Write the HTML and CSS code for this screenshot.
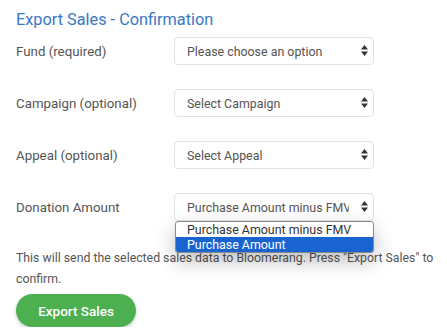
FILE: index.html
```html
<!DOCTYPE html>
<html lang="en">
<head>
    <meta charset="UTF-8">
    <title>Export Sales - Confirmation</title>
    <link rel="stylesheet" href="styles.css">
</head>
<body>
    <div class="page">
        <h2 class="title">Export Sales - Confirmation</h2>

        <form class="export-form">
            <div class="row">
                <label for="fund">Fund (required)</label>
                <div class="select-wrap">
                    <select id="fund"><option>Please choose an option</option></select>
                    <svg class="arrows" width="7" height="11" viewBox="0 0 7 11"><path d="M3.5 0L7 4.5H0Z M3.5 11L7 6.5H0Z" fill="#333"/></svg>
                </div>
            </div>
            <div class="row">
                <label for="campaign">Campaign (optional)</label>
                <div class="select-wrap">
                    <select id="campaign"><option>Select Campaign</option></select>
                    <svg class="arrows" width="7" height="11" viewBox="0 0 7 11"><path d="M3.5 0L7 4.5H0Z M3.5 11L7 6.5H0Z" fill="#333"/></svg>
                </div>
            </div>
            <div class="row">
                <label for="appeal">Appeal (optional)</label>
                <div class="select-wrap">
                    <select id="appeal"><option>Select Appeal</option></select>
                    <svg class="arrows" width="7" height="11" viewBox="0 0 7 11"><path d="M3.5 0L7 4.5H0Z M3.5 11L7 6.5H0Z" fill="#333"/></svg>
                </div>
            </div>
            <div class="row">
                <label for="amount">Donation Amount</label>
                <div class="select-wrap">
                    <select id="amount"><option>Purchase Amount minus FMV</option><option>Purchase Amount</option></select>
                    <svg class="arrows" width="7" height="11" viewBox="0 0 7 11"><path d="M3.5 0L7 4.5H0Z M3.5 11L7 6.5H0Z" fill="#333"/></svg>

                    <!-- open dropdown list -->
                    <ul class="options">
                        <li>Purchase Amount minus FMV</li>
                        <li class="active">Purchase Amount</li>
                    </ul>
                </div>
            </div>

            <p class="note">This will send the selected sales data to Bloomerang. Press "Export Sales" to confirm.</p>

            <button type="submit" class="btn">Export Sales</button>
        </form>
    </div>
</body>
</html>
```

FILE: styles.css
```css
* {
    margin: 0;
    padding: 0;
    box-sizing: border-box;
    font-family: 'Roboto', sans-serif;
}
body {
    background-color: #fff;
    color: #555;
}
.page {
    padding: 9px 6px 0 16px;
}
.title {
    color: #3a78c4;
    font-size: 16.3px;
    font-weight: 400;
    line-height: 22px;
    margin-bottom: 6px;
}
.row {
    display: flex;
    align-items: center;
    height: 28px;
    margin-bottom: 24px;
}
.row label {
    width: 158px;
    font-size: 13.3px;
    color: #555;
}
.select-wrap {
    position: relative;
    width: 200px;
}
.select-wrap select {
    appearance: none;
    -webkit-appearance: none;
    width: 100%;
    height: 28px;
    padding: 0 24px 0 12px;
    font-size: 12.4px;
    color: #555;
    background: #fff;
    border: 1px solid #e2e2e2;
    border-radius: 4px;
    outline: none;
}
.arrows {
    position: absolute;
    right: 6px;
    top: 8px;
    pointer-events: none;
}
.options {
    position: absolute;
    top: 28px;
    left: 1px;
    width: 199px;
    list-style: none;
    background: #fff;
    border: 1px solid #8a8a8a;
    border-radius: 3px;
    box-shadow: 0 8px 20px rgba(0, 0, 0, 0.25);
    overflow: hidden;
    z-index: 2;
}
.options li {
    height: 15px;
    line-height: 15px;
    padding-left: 11px;
    font-size: 12.4px;
    color: #333;
}
.options li.active {
    background: #1a64d2;
    color: #fff;
}
.note {
    font-size: 12.3px;
    line-height: 21px;
    margin-top: 27px;
}
.btn {
    margin-top: 4px;
    width: 120px;
    height: 33px;
    border: none;
    border-radius: 17px;
    background-color: #4caf50;
    color: #fff;
    font-size: 13.5px;
    font-weight: 500;
    box-shadow: 0 2px 4px rgba(0, 0, 0, 0.2);
    cursor: pointer;
}
```
